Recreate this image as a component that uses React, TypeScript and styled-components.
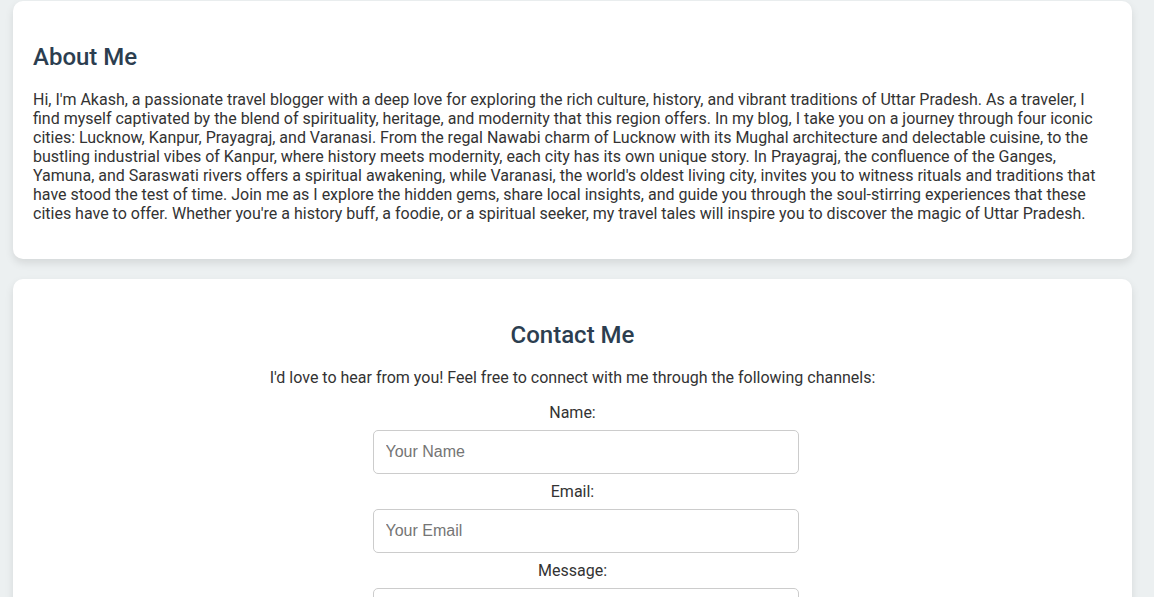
import React from "react";
import styled, { createGlobalStyle } from "styled-components";

const GlobalStyle = createGlobalStyle`
  html { scrollbar-width: none; }
  html::-webkit-scrollbar { display: none; }
  body {
    margin: 0;
    background: #ecf0f1;
    font-family: Roboto, "Liberation Sans", Arial, sans-serif;
    line-height: 19px;
    color: #333;
  }
`;

const Page = styled.main`
  padding: 1px 22px 40px 13px;
  display: flex;
  flex-direction: column;
  gap: 20px;
`;

const Card = styled.section<{ $center?: boolean }>`
  background: #fff;
  border-radius: 10px;
  box-shadow: 0 4px 8px rgba(0, 0, 0, 0.1);
  padding: 20px;
  text-align: ${(p) => (p.$center ? "center" : "left")};
`;

const Heading = styled.h2`
  font-size: 24px;
  font-weight: 500;
  line-height: 1.2;
  color: #2c3e50;
  margin: 22px 0 18px;
`;

const Text = styled.p`
  font-size: 16px;
  margin: 16px 0;
`;

const Form = styled.form`
  max-width: 400px;
  margin: 0 auto;
`;

const Label = styled.label`
  display: block;
  font-size: 16px;
  margin-bottom: 8px;
`;

const Input = styled.input`
  display: block;
  width: 100%;
  height: 18px;
  padding: 12px;
  margin: 0 0 8px;
  border: 1px solid #ccc;
  border-radius: 5px;
  font-family: "Liberation Sans", Arial, sans-serif;
  font-size: 16px;
  color: #333;
  &::placeholder { color: #757575; }
`;

const TextArea = styled.textarea`
  display: block;
  width: 100%;
  height: 100px;
  padding: 12px;
  margin: 0 0 8px;
  border: 1px solid #ccc;
  border-radius: 5px;
  font-family: "Liberation Sans", Arial, sans-serif;
  font-size: 16px;
  resize: vertical;
`;

const Button = styled.button`
  background: #3498db;
  color: #fff;
  border: none;
  border-radius: 5px;
  padding: 10px 20px;
  font-size: 16px;
  font-family: Roboto, sans-serif;
`;

export default function App() {
  return (
    <>
      <GlobalStyle />
      <Page>
        <Card>
          <Heading>About Me</Heading>
          <Text>
            Hi, I'm Akash, a passionate travel blogger with a deep love for exploring the rich culture, history, and vibrant traditions of Uttar Pradesh. As a traveler, I find myself captivated by the blend of spirituality, heritage, and modernity that this region offers. In my blog, I take you on a journey through four iconic cities: Lucknow, Kanpur, Prayagraj, and Varanasi. From the regal Nawabi charm of Lucknow with its Mughal architecture and delectable cuisine, to the bustling industrial vibes of Kanpur, where history meets modernity, each city has its own unique story. In Prayagraj, the confluence of the Ganges, Yamuna, and Saraswati rivers offers a spiritual awakening, while Varanasi, the world's oldest living city, invites you to witness rituals and traditions that have stood the test of time. Join me as I explore the hidden gems, share local insights, and guide you through the soul-stirring experiences that these cities have to offer. Whether you're a history buff, a foodie, or a spiritual seeker, my travel tales will inspire you to discover the magic of Uttar Pradesh.
          </Text>
        </Card>
        <Card $center>
          <Heading>Contact Me</Heading>
          <Text>I'd love to hear from you! Feel free to connect with me through the following channels:</Text>
          <Form onSubmit={(e) => e.preventDefault()}>
            <Label htmlFor="name">Name:</Label>
            <Input id="name" type="text" placeholder="Your Name" />
            <Label htmlFor="email">Email:</Label>
            <Input id="email" type="email" placeholder="Your Email" />
            <Label htmlFor="message">Message:</Label>
            <TextArea id="message" placeholder="Your Message" />
            <Button type="submit">Send</Button>
          </Form>
        </Card>
      </Page>
    </>
  );
}
